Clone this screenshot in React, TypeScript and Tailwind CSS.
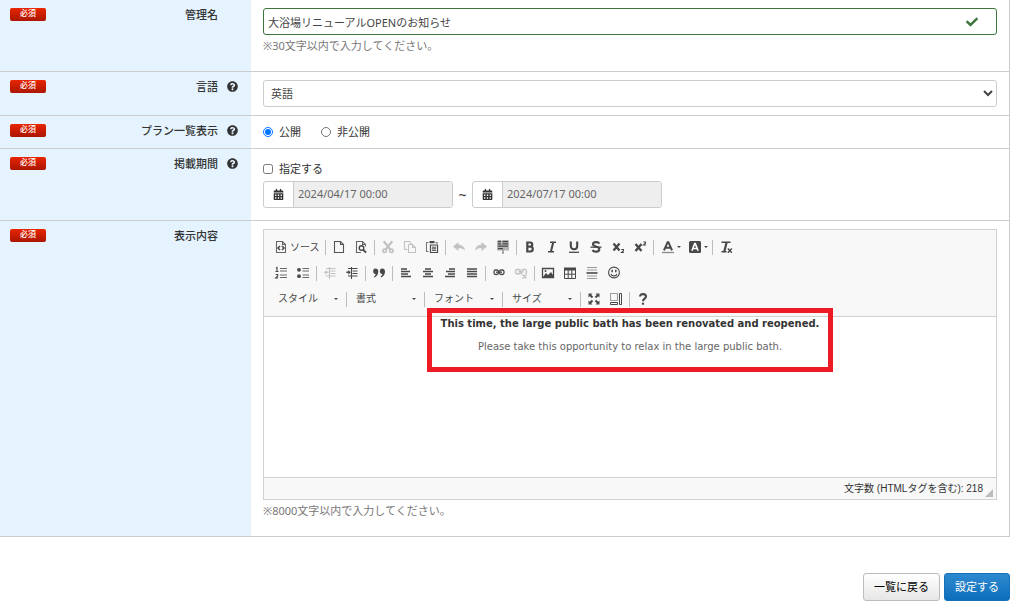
import type { ReactNode } from "react";
import { FaCalendarAlt, FaCheck, FaQuestionCircle } from "react-icons/fa";

interface IconProps {
  children: ReactNode;
}

function Icon({ children }: IconProps) {
  return (
    <svg
      viewBox="0 0 16 16"
      width="16"
      height="16"
      fill="none"
      stroke="#484848"
      strokeWidth="1.3"
      aria-hidden="true"
      className="shrink-0"
    >
      {children}
    </svg>
  );
}

const page = "M3.5 2.5h6l3 3v8h-9zM9.5 2.5v3h3";

const icons = {
  source: (
    <Icon>
      <path d={page} strokeWidth="1.1" stroke="#666666" />
      <path d="M7 7L5 9l2 2M9 7l2 2-2 2" strokeWidth="1.5" />
    </Icon>
  ),
  newPage: (
    <Icon>
      <path d={page} strokeWidth="1.1" stroke="#555555" />
    </Icon>
  ),
  preview: (
    <Icon>
      <path d="M8 13.5H3.5v-11h6l3 3v2M9.5 2.5v3h3M12.5 12v1.5" strokeWidth="1.1" stroke="#666666" />
      <circle cx="8.5" cy="9" r="2.3" strokeWidth="1.4" />
      <path d="M10 10.6l3 2.9" strokeWidth="1.9" />
    </Icon>
  ),
  cut: (
    <Icon>
      <path d="M3.8 2.2l6.5 8.3M12.2 2.2l-6.5 8.3" strokeWidth="2.2" />
      <circle cx="4.6" cy="11.8" r="1.7" strokeWidth="1.6" />
      <circle cx="11.4" cy="11.8" r="1.7" strokeWidth="1.6" />
    </Icon>
  ),
  copy: (
    <Icon>
      <path d="M5.5 10.5h-3v-8h5L9.5 5M6.5 5.5h4l3 3v5h-7zM10.5 5.5v3h3" strokeWidth="1.1" />
    </Icon>
  ),
  paste: (
    <Icon>
      <path d="M4.5 12.5h-2v-9h2M11.5 3.5h1.5v1.5" strokeWidth="1.1" stroke="#777777" />
      <path d="M5.5 2h5v2.2h-5z" fill="#484848" stroke="none" />
      <path d="M6.5 6h7v7.5h-7z" strokeWidth="1.2" />
      <path d="M8 8.2h4M8 9.8h4M8 11.4h4" strokeWidth="1" />
    </Icon>
  ),
  undo: (
    <Icon>
      <path d="M2 7.5L7.5 3v2.7c4 0 6.2 2.5 6.5 6.3-1.3-2.2-3.5-3-6.5-3V12z" fill="#484848" stroke="none" />
    </Icon>
  ),
  redo: (
    <Icon>
      <path d="M14 7.5L8.5 3v2.7c-4 0-6.2 2.5-6.5 6.3 1.3-2.2 3.5-3 6.5-3V12z" fill="#484848" stroke="none" />
    </Icon>
  ),
  selectAll: (
    <Icon>
      <path d="M2 1.5h12v10H2z" fill="#b5b5b5" stroke="none" />
      <path d="M3 2.5h3M7.5 2.5h5.5M3 4.8h3M7.5 4.8h5.5M3 7.2h10M3 9.6h5" />
      <path d="M8 11.5v1M8 13.2v1.3" strokeWidth="1.5" />
    </Icon>
  ),
  bold: (
    <Icon>
      <path d="M5.3 3.5h2.9c2.7 0 2.7 4.2 0 4.2H5.3h3.2c3 0 3 4.8 0 4.8H5.3z" strokeWidth="2.2" />
    </Icon>
  ),
  italic: (
    <Icon>
      <path d="M6 3.2h6M4 12.8h6" strokeWidth="1.4" />
      <path d="M9.3 3L6.8 13" strokeWidth="2.1" />
    </Icon>
  ),
  underline: (
    <Icon>
      <path d="M4.8 2.5V7c0 4.3 6.4 4.3 6.4 0V2.5" strokeWidth="2.1" />
      <path d="M3 13.3h10" />
    </Icon>
  ),
  strike: (
    <Icon>
      <path d="M11.3 4.7C10.3 2.4 5 2.7 5 5.2c0 3 6.3 1.8 6.3 5 0 3-5.6 3.3-6.8.8" strokeWidth="2.1" />
      <path d="M2.5 8.2h11" />
    </Icon>
  ),
  subscript: (
    <Icon>
      <path d="M3.5 4.5l6 7M9.5 4.5l-6 7" strokeWidth="2.3" />
      <path d="M11.3 10.5h2.2v1.2l-2 1.8h2.4" strokeWidth="1.1" />
    </Icon>
  ),
  superscript: (
    <Icon>
      <path d="M3.5 5l6 7M9.5 5l-6 7" strokeWidth="2.3" />
      <path d="M11.3 3h2.2v1.2l-2 1.8h2.4" strokeWidth="1.1" />
    </Icon>
  ),
  textColor: (
    <Icon>
      <path d="M4 11.3L7.6 3.2h.8l3.6 8.1M5.5 8.7h5" strokeWidth="2" />
      <path d="M2 13.5h12" stroke="#888888" />
    </Icon>
  ),
  bgColor: (
    <Icon>
      <rect x="2" y="2" width="12" height="12" rx="1.5" fill="#484848" stroke="none" />
      <path d="M4.9 11.8L7.7 4.6h.6l2.8 7.2M6 9.5h4" stroke="#ffffff" strokeWidth="1.6" />
    </Icon>
  ),
  removeFormat: (
    <Icon>
      <path d="M3.5 3.3h9M3.5 12.8h5" strokeWidth="1.5" />
      <path d="M8.7 3L6.2 13" strokeWidth="2.2" />
      <path d="M9.8 9.6l4 4.2M13.8 9.6l-4 4.2" strokeWidth="1.4" />
    </Icon>
  ),
  numbered: (
    <Icon>
      <path d="M7 3.5h7M7 6h7M7 10h7M7 12.5h7" stroke="#666666" strokeWidth="1.1" />
      <path d="M3 3.2l1-.7v4M2.5 6.5h3M2.7 9.5h2v1.5l-2 2h2.5" strokeWidth="1.1" />
    </Icon>
  ),
  bulleted: (
    <Icon>
      <circle cx="4" cy="4.8" r="1.9" fill="#484848" stroke="none" />
      <circle cx="4" cy="11.2" r="1.9" fill="#484848" stroke="none" />
      <path d="M7.5 3.5h6.5M7.5 6h6.5M7.5 10h6.5M7.5 12.5h6.5" stroke="#666666" strokeWidth="1.1" />
    </Icon>
  ),
  outdent: (
    <Icon>
      <path d="M4 3.5h9.5M8.5 6h5M8.5 8.5h5M4 11h9.5M7.5 2v12" strokeWidth="1.1" />
      <path d="M2 7.3L4.5 5v1.6h2v1.5h-2v1.6z" fill="#484848" stroke="none" />
    </Icon>
  ),
  indent: (
    <Icon>
      <path d="M4 3.5h9.5M8.5 6h5M8.5 8.5h5M4 11h9.5M7.5 2v12" strokeWidth="1.1" />
      <path d="M6.8 7.3L4.3 5v1.6h-2v1.5h2v1.6z" fill="#484848" stroke="none" />
    </Icon>
  ),
  quote: (
    <Icon>
      <path
        d="M4.4 3.5c1.9 0 2.9 1.2 2.9 3 0 3-1.5 5-3.9 6l-.5-1c1.1-.7 1.6-1.4 1.7-2.5-3.2 0-3.2-5.5-.2-5.5zM11.1 3.5c1.9 0 2.9 1.2 2.9 3 0 3-1.5 5-3.9 6l-.5-1c1.1-.7 1.6-1.4 1.7-2.5-3.2 0-3.2-5.5-.2-5.5z"
        fill="#484848"
        stroke="none"
      />
    </Icon>
  ),
  alignLeft: (
    <Icon>
      <path d="M3 4h6M3 6.5h9M3 9h7M3 11.5h10" strokeWidth="1.7" />
    </Icon>
  ),
  alignCenter: (
    <Icon>
      <path d="M5 4h6M3 6.5h10M5 9h6M3 11.5h10" strokeWidth="1.7" />
    </Icon>
  ),
  alignRight: (
    <Icon>
      <path d="M7 4h6M4 6.5h9M6 9h7M3 11.5h10" strokeWidth="1.7" />
    </Icon>
  ),
  justify: (
    <Icon>
      <path d="M3 4h10M3 6.5h10M3 9h10M3 11.5h10" strokeWidth="1.7" />
    </Icon>
  ),
  link: (
    <Icon>
      <rect x="3" y="5" width="4.5" height="4.5" rx="1.8" />
      <rect x="8.5" y="5" width="4.5" height="4.5" rx="1.8" />
      <path d="M5 7.2h6" />
    </Icon>
  ),
  unlink: (
    <Icon>
      <rect x="2.5" y="4.5" width="5" height="4.5" rx="1.8" />
      <path d="M9 9c-1 0-.5-4.5 1-4.5h2c2 0 2 4 .5 4.5M5 6.8h6M9.5 9.5l4 4M13.5 9.5l-4 4" />
    </Icon>
  ),
  image: (
    <Icon>
      <path d="M2.5 3.5h11v9h-11z" />
      <path d="M3 12l3-4 2 2 3-3 2 3v2z" fill="#484848" stroke="none" />
      <circle cx="5.5" cy="6" r="1" fill="#484848" stroke="none" />
    </Icon>
  ),
  table: (
    <Icon>
      <path d="M2 2.5h12v3H2z" fill="#484848" stroke="none" />
      <path d="M2.5 5v8.5h11V5M2.5 9.2h11M6.2 5v8.5M9.8 5v8.5" strokeWidth="1" />
    </Icon>
  ),
  rule: (
    <Icon>
      <path d="M3 2.5h10M3 5h10M3 11h10M3 13.5h10" stroke="#999999" strokeWidth="1.2" />
      <path d="M2.5 8h11" strokeWidth="1.6" />
    </Icon>
  ),
  smiley: (
    <Icon>
      <circle cx="8" cy="7.5" r="5.4" strokeWidth="1.1" />
      <path d="M6.2 4.8v2.4M9.8 4.8v2.4" strokeWidth="1.5" />
      <path d="M5 9c1 2.5 5 2.5 6 0" strokeWidth="1.1" />
    </Icon>
  ),
  maximize: (
    <Icon>
      <path
        d="M2.5 2.5h4L5.2 3.8l2 2-1.4 1.4-2-2-1.3 1.3zM13.5 2.5v4l-1.3-1.3-2 2-1.4-1.4 2-2-1.3-1.3zM2.5 13.5v-4l1.3 1.3 2-2 1.4 1.4-2 2 1.3 1.3zM13.5 13.5h-4l1.3-1.3-2-2 1.4-1.4 2 2 1.3-1.3z"
        fill="#484848"
        stroke="none"
      />
    </Icon>
  ),
  blocks: (
    <Icon>
      <path d="M2.5 2.5h7v7h-7z" strokeWidth="1.1" strokeDasharray="1 1" />
      <path d="M11.5 2.5h2v11h-2zM2.5 11.5h7v2h-7z" strokeWidth="1" />
    </Icon>
  ),
  about: (
    <Icon>
      <path d="M5 5.6c0-3.4 6-3.2 6 0C11 7.7 8 7.5 8 10.2" strokeWidth="2.1" />
      <path d="M8 11.7v2" strokeWidth="2.2" />
    </Icon>
  ),
};

interface ToolProps {
  name: keyof typeof icons;
  label: string;
  off?: boolean;
}

function Tool({ name, label, off }: ToolProps) {
  return (
    <button
      type="button"
      aria-label={label}
      disabled={off}
      className="flex h-[26px] w-[22px] items-center justify-center disabled:opacity-30"
    >
      {icons[name]}
    </button>
  );
}

function Sep() {
  return <span className="mx-[2px] h-[15px] w-px shrink-0 bg-[#bcbcbc]" />;
}

function Caret() {
  return <span className="border-x-2 border-t-2 border-x-transparent border-t-[#484848]" />;
}

function ColorTool({ name, label }: ToolProps) {
  return (
    <button type="button" aria-label={label} className="flex h-[26px] w-[27px] items-center gap-px pl-1">
      {icons[name]}
      <Caret />
    </button>
  );
}

function Combo({ label }: { label: string }) {
  return (
    <button
      type="button"
      className="flex h-[26px] w-[73px] items-center justify-between pr-[6px] pb-px pl-[7px] text-[10px] text-[#484848]"
    >
      {label}
      <Caret />
    </button>
  );
}

interface RowProps {
  label: string;
  htmlFor?: string;
  help?: boolean;
  className: string;
  children: ReactNode;
}

function Row({ label, htmlFor, help, className, children }: RowProps) {
  return (
    <div className="flex border-r border-b border-[#cccccc]">
      <div className="flex w-[251px] shrink-0 items-start bg-[#e5f3ff] pt-2 pl-[10px]">
        <span className="h-[13px] w-9 rounded-[2px] bg-linear-to-b from-[#e92500] to-[#ab1500] text-center text-[8px] leading-[10px] font-medium text-white">
          必須
        </span>
        <label htmlFor={htmlFor} className="flex-1 text-right leading-[14px] font-medium">
          {label}
        </label>
        <span className="flex w-[33px] justify-center pt-px pr-1">
          {help && <FaQuestionCircle size={11} />}
        </span>
      </div>
      <div className={`min-w-0 flex-1 px-3 ${className}`}>{children}</div>
    </div>
  );
}

function DateField({ label, value }: { label: string; value: string }) {
  return (
    <div className="flex h-[27px] w-[190px] overflow-hidden rounded-[3px] border border-[#cccccc]">
      <span className="flex w-[30px] shrink-0 items-center justify-center border-r border-[#cccccc]">
        <FaCalendarAlt size={11} />
      </span>
      <input
        aria-label={label}
        defaultValue={value}
        disabled
        className="w-full min-w-0 bg-[#eeeeee] px-1 text-[#666666]"
      />
    </div>
  );
}

export default function App() {
  return (
    <form className="bg-white font-['Noto_Sans','Noto_Sans_CJK_JP',sans-serif] text-[11px] text-[#333333]">
      <Row label="管理名" htmlFor="title" className="pt-2 pb-[17px]">
        <div className="relative">
          <input
            id="title"
            defaultValue="大浴場リニューアルOPENのお知らせ"
            className="block h-[27px] w-full rounded-[3px] border border-[#3c763d] px-1 text-[#444444]"
          />
          <FaCheck size={12} className="absolute top-2 right-[19px] text-[#3c763d]" />
        </div>
        <p className="mt-[3px] leading-4 text-[#777777]">※30文字以内で入力してください。</p>
      </Row>

      <Row label="言語" htmlFor="lang" help className="py-2">
        <select
          id="lang"
          className="block h-[27px] w-full rounded-[3px] border border-[#cccccc] bg-white px-[3px] text-[#444444]"
        >
          <option>英語</option>
        </select>
      </Row>

      <Row label="プラン一覧表示" help className="flex gap-5 py-2">
        <label className="flex h-4 items-center gap-[6px]">
          <input type="radio" name="open" defaultChecked className="size-[10px] accent-[#0075ff]" />
          公開
        </label>
        <label className="flex h-4 items-center gap-[6px]">
          <input type="radio" name="open" className="size-[10px] accent-[#0075ff]" />
          非公開
        </label>
      </Row>

      <Row label="掲載期間" help className="py-3">
        <label className="flex h-4 items-center gap-[6px]">
          <input type="checkbox" className="size-[10px]" />
          指定する
        </label>
        <div className="mt-1 flex items-center">
          <DateField label="開始日時" value="2024/04/17 00:00" />
          <span className="w-[19px] text-center text-sm leading-4">~</span>
          <DateField label="終了日時" value="2024/07/17 00:00" />
        </div>
      </Row>

      <Row label="表示内容" className="pt-2 pb-[17px]">
        <div className="relative border border-[#d1d1d1]">
          <div className="border-b border-[#d1d1d1] bg-[#f8f8f8] px-[6px] py-1">
            <div className="flex items-center">
              <button type="button" className="flex h-[26px] items-center gap-px px-[3px] text-[10px] text-[#484848]">
                {icons.source}
                ソース
              </button>
              <Sep />
              <Tool name="newPage" label="新しいページ" />
              <Tool name="preview" label="プレビュー" />
              <Sep />
              <Tool name="cut" label="切り取り" off />
              <Tool name="copy" label="コピー" off />
              <Tool name="paste" label="貼り付け" />
              <Sep />
              <Tool name="undo" label="元に戻す" off />
              <Tool name="redo" label="やり直す" off />
              <Tool name="selectAll" label="すべて選択" />
              <Sep />
              <Tool name="bold" label="太字" />
              <Tool name="italic" label="斜体" />
              <Tool name="underline" label="下線" />
              <Tool name="strike" label="打ち消し線" />
              <Tool name="subscript" label="下付き" />
              <Tool name="superscript" label="上付き" />
              <Sep />
              <ColorTool name="textColor" label="文字色" />
              <ColorTool name="bgColor" label="背景色" />
              <Sep />
              <Tool name="removeFormat" label="書式を解除" />
            </div>
            <div className="flex items-center">
              <Tool name="numbered" label="番号付きリスト" />
              <Tool name="bulleted" label="番号無しリスト" />
              <Sep />
              <Tool name="outdent" label="インデント解除" off />
              <Tool name="indent" label="インデント" />
              <Sep />
              <Tool name="quote" label="引用" />
              <Sep />
              <Tool name="alignLeft" label="左揃え" />
              <Tool name="alignCenter" label="中央揃え" />
              <Tool name="alignRight" label="右揃え" />
              <Tool name="justify" label="両端揃え" />
              <Sep />
              <Tool name="link" label="リンク" />
              <Tool name="unlink" label="リンクを削除" off />
              <Sep />
              <Tool name="image" label="画像" />
              <Tool name="table" label="表" />
              <Tool name="rule" label="水平線" />
              <Tool name="smiley" label="絵文字" />
            </div>
            <div className="flex items-center pl-px">
              <Combo label="スタイル" />
              <Sep />
              <Combo label="書式" />
              <Sep />
              <Combo label="フォント" />
              <Sep />
              <Combo label="サイズ" />
              <Sep />
              <Tool name="maximize" label="最大化" />
              <Tool name="blocks" label="ブロック表示" />
              <Sep />
              <Tool name="about" label="ヘルプ" />
            </div>
          </div>
          <div className="h-40 text-center font-['DejaVu_Sans',sans-serif] text-[10px] leading-[14px]">
            <p className="font-bold">This time, the large public bath has been renovated and reopened.</p>
            <p className="mt-[9px] text-[#666666]">
              Please take this opportunity to relax in the large public bath.
            </p>
          </div>
          <div className="absolute top-[78px] left-1/2 h-16 w-[406px] -translate-x-1/2 border-[5px] border-[#ed1c24]" />
          <div className="flex h-[22px] items-center justify-end gap-[2px] border-t border-[#d1d1d1] bg-[#f8f8f8] pr-[3px] font-['Liberation_Sans','Noto_Sans_CJK_JP',sans-serif] text-[10px]">
            文字数 (HTMLタグを含む): 218
            <span className="mb-[2px] self-end border-b-8 border-l-8 border-b-[#bcbcbc] border-l-transparent" />
          </div>
        </div>
        <p className="mt-[3px] leading-4 text-[#777777]">※8000文字以内で入力してください。</p>
      </Row>

      <div className="mt-9 flex justify-end gap-1">
        <button
          type="button"
          className="h-7 rounded-[3px] border border-[#bbbbbb] bg-linear-to-b from-white to-[#e6e6e6] px-[10px] text-black"
        >
          一覧に戻る
        </button>
        <button
          type="submit"
          className="h-7 rounded-[3px] border border-[#1570b8] bg-linear-to-b from-[#2d89cf] to-[#0a6ebd] px-[10px] text-white"
        >
          設定する
        </button>
      </div>
    </form>
  );
}
